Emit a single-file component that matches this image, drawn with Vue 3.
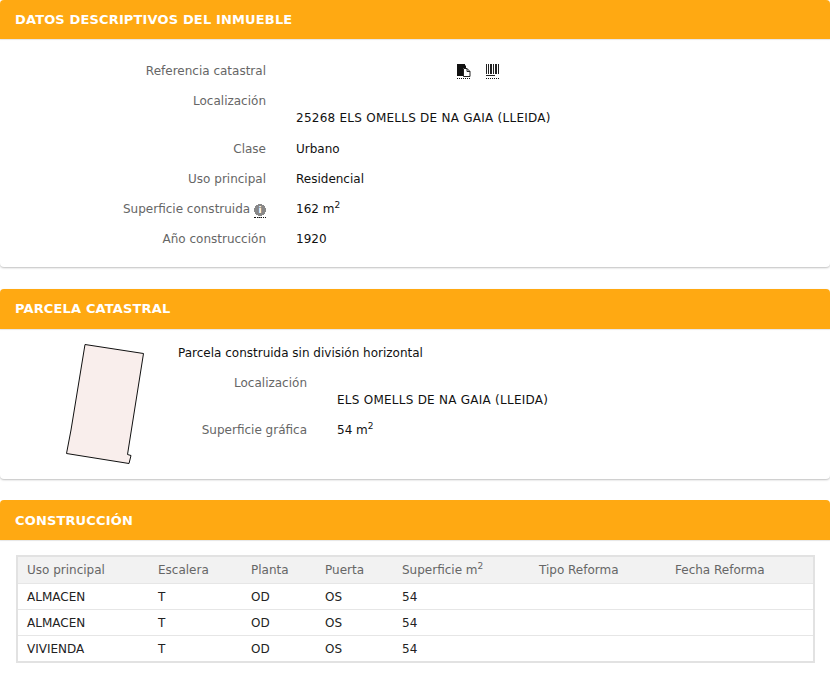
<script setup>
const rowsA = [
  { label: 'Clase', value: 'Urbano' },
  { label: 'Uso principal', value: 'Residencial' },
]
const cols = [
  { name: 'Uso principal', w: 131 },
  { name: 'Escalera', w: 93 },
  { name: 'Planta', w: 74 },
  { name: 'Puerta', w: 77 },
  { name: 'Superficie m', sup: '2', w: 137 },
  { name: 'Tipo Reforma', w: 136 },
  { name: 'Fecha Reforma', w: 147 },
]
const rows = [
  ['ALMACEN', 'T', 'OD', 'OS', '54', '', ''],
  ['ALMACEN', 'T', 'OD', 'OS', '54', '', ''],
  ['VIVIENDA', 'T', 'OD', 'OS', '54', '', ''],
]
</script>

<template>
  <div class="page">
    <section class="panel">
      <h2 class="head">DATOS DESCRIPTIVOS DEL INMUEBLE</h2>
      <div class="body body-a">
        <div class="row">
          <div class="lab">Referencia catastral</div>
          <div class="val icons">
            <span class="ico-link">
              <svg width="14" height="13" viewBox="0 0 14 13">
                <path d="M0 0h8v1l1 1v2H6v8H0z" fill="#111" />
                <path d="M6.500 4.500h3.500l3 3v5h-6.500z" fill="#fff" stroke="#222" />
                <path d="M10 4.500v3h3" fill="none" stroke="#222" />
              </svg>
            </span>
            <span class="ico-link">
              <svg width="14" height="13" viewBox="0 0 14 13">
                <path d="M0 0h1v10H0zM2 0h1v10H2zM4 0h2v10H4zM7 0h1v10H7zM9 0h2v10H9zM12 0h1v10h-1zM0 11h9v1H0z" fill="#222" />
              </svg>
            </span>
          </div>
        </div>
        <div class="row row-tall">
          <div class="lab">Localización</div>
          <div class="val val-low caps">25268 ELS OMELLS DE NA GAIA (LLEIDA)</div>
        </div>
        <div v-for="r in rowsA" :key="r.label" class="row">
          <div class="lab">{{ r.label }}</div>
          <div class="val">{{ r.value }}</div>
        </div>
        <div class="row">
          <div class="lab">
            Superficie construida
            <span class="info">i</span>
          </div>
          <div class="val">162 m<sup>2</sup></div>
        </div>
        <div class="row">
          <div class="lab">Año construcción</div>
          <div class="val">1920</div>
        </div>
      </div>
    </section>

    <section class="panel panel-mid">
      <h2 class="head">PARCELA CATASTRAL</h2>
      <div class="body body-b">
        <div class="plot">
          <svg width="110" height="135" viewBox="0 0 110 135">
            <path d="M35 9.500 93.500 18.500 77.500 119.500 81 120.500 79 128.500 16.500 118.500 21 95z" fill="#f9eeec" stroke="#111" stroke-width="1" />
          </svg>
        </div>
        <div class="plot-info">
          <div class="plot-title">Parcela construida sin división horizontal</div>
          <div class="row row-tall row-b">
            <div class="lab lab-b">Localización</div>
            <div class="val val-low caps">ELS OMELLS DE NA GAIA (LLEIDA)</div>
          </div>
          <div class="row row-b row-area">
            <div class="lab lab-b">Superficie gráfica</div>
            <div class="val">54 m<sup>2</sup></div>
          </div>
        </div>
      </div>
    </section>

    <section class="panel panel-last">
      <h2 class="head">CONSTRUCCIÓN</h2>
      <div class="table-wrap">
        <table class="grid">
          <colgroup>
            <col v-for="c in cols" :key="c.name" :style="{ width: c.w + 'px' }" />
          </colgroup>
          <thead>
            <tr>
              <th v-for="c in cols" :key="c.name">{{ c.name }}<sup v-if="c.sup">{{ c.sup }}</sup></th>
            </tr>
          </thead>
          <tbody>
            <tr v-for="(r, i) in rows" :key="i">
              <td v-for="(v, j) in r" :key="j">{{ v }}</td>
            </tr>
          </tbody>
        </table>
      </div>
    </section>
  </div>
</template>

<style>
html, body { margin: 0; background: #fff; }
</style>

<style scoped>
.page {
  width: 830px;
  height: 673px;
  overflow: hidden;
  font-family: "DejaVu Sans", Verdana, sans-serif;
  font-size: 12px;
  color: #111;
  background: #fff;
}
.panel {
  margin-bottom: 22px;
  border-radius: 4px;
  box-shadow: 0 1px 2px rgba(0, 0, 0, 0.25);
}
.panel-mid { margin-bottom: 21px; }
.panel-last { box-shadow: none; margin-bottom: 0; }
.head {
  margin: 0;
  height: 39px;
  padding: 0 15px;
  background: #ffa912;
  color: #fff;
  font-size: 13px;
  letter-spacing: 0.15px;
  font-weight: bold;
  line-height: 39px;
  box-sizing: border-box;
  border-radius: 4px 4px 0 0;
  box-shadow: 0 1px 1px rgba(0, 0, 0, 0.1);
}
.panel + .panel .head { height: 40px; line-height: 40px; }
.panel-last.panel .head { line-height: 41px; }
.body-a { padding: 16px 0 14px; }
.row { display: flex; height: 30px; line-height: 33px; }
.row-tall { height: 48px; }
.row-area { line-height: 31px; }
.lab {
  width: 266px;
  text-align: right;
  color: #666;
  flex: none;
}
.val { margin-left: 30px; white-space: nowrap; }
.val-low { padding-top: 17px; }
.caps { letter-spacing: 0.25px; }
.icons { display: flex; gap: 16px; margin-left: 191px; align-items: flex-start; padding-top: 9px; }
.ico-link {
  display: block;
  height: 14px;
  width: 13px;
  border-bottom: 1px dotted #111;
  line-height: 0;
}
sup { font-size: 9px; line-height: 0; }
.info {
  display: inline-block;
  width: 12px;
  height: 13px;
  background: radial-gradient(circle 6px at 6px 6px, #888 96%, transparent 100%);
  border-bottom: 1px dotted #111;
  color: #fff;
  font-size: 9px;
  font-weight: bold;
  line-height: 12px;
  text-align: center;
  vertical-align: 0;
}
.body-b { display: flex; height: 150px; padding-left: 50px; box-sizing: border-box; }
.plot { width: 110px; height: 135px; margin-top: 6px; flex: none; }
.plot-info { margin-left: 18px; padding-top: 8px; }
.plot-title { height: 30px; line-height: 33px; }
.lab-b { width: 129px; }
.row-b .val { margin-left: 30px; }
.table-wrap { padding: 15px 15px 0 16px; }
.grid {
  width: 799px;
  table-layout: fixed;
  border-collapse: separate;
  border-spacing: 0;
  border: 2px solid #e2e2e2;
}
th, td {
  padding: 1px 0 0 9px;
  text-align: left;
  height: 26px;
  border-bottom: 1px solid #e6e6e6;
  box-sizing: border-box;
}
thead th {
  height: 27px;
  padding-top: 0;
  padding-bottom: 1px;
  background: #f2f2f2;
  color: #666;
  font-weight: normal;
}
tbody tr:last-child td { border-bottom: none; height: 25px; }
td { color: #222; }
</style>
